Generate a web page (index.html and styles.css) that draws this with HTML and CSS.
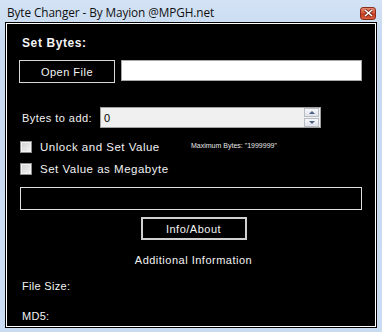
FILE: index.html
```html
<!DOCTYPE html>
<html lang="en">
<head>
    <meta charset="UTF-8">
    <title>Byte Changer - By Mayion @MPGH.net</title>
    <link rel="stylesheet" href="styles.css">
</head>
<body>
    <div class="window">
        <div class="titlebar">
            <span class="title">Byte Changer - By Mayion @MPGH.net</span>
            <span class="close-btn">
                <svg width="9" height="8" viewBox="0 0 9 8">
                    <path d="M1 1 L8 7 M8 1 L1 7" stroke="#6a2216" stroke-width="3"/>
                    <path d="M1 1 L8 7 M8 1 L1 7" stroke="#fff" stroke-width="1.6"/>
                </svg>
            </span>
        </div>

        <div class="client">
            <div class="form">
                <div class="heading">Set Bytes:</div>

                <div class="file-row">
                    <div class="btn open-btn">Open File</div>
                    <div class="path-box"></div>
                </div>

                <div class="bytes-row">
                    <span class="label">Bytes to add:</span>
                    <div class="spin-box">
                        <span class="spin-value">0</span>
                        <span class="spinner">
                            <span class="spin-half"><span class="arrow-up"></span></span>
                            <span class="spin-half"><span class="arrow-down"></span></span>
                        </span>
                    </div>
                </div>

                <div class="options">
                    <div class="check-row">
                        <span class="check"></span>
                        <span class="check-label">Unlock and Set Value</span>
                    </div>
                    <span class="max-note">Maximum Bytes: "1999999"</span>
                    <div class="check-row">
                        <span class="check"></span>
                        <span class="check-label">Set Value as Megabyte</span>
                    </div>
                </div>

                <div class="output-box"></div>

                <div class="center-col">
                    <div class="btn info-btn">Info/About</div>
                    <div class="sub-title">Additional Information</div>
                </div>

                <div class="info-line">File Size:</div>
                <div class="info-line md5">MD5:</div>
            </div>
        </div>
    </div>
</body>
</html>
```

FILE: styles.css
```css
body {
    margin: 0;
    padding: 0;
    background: #fff;
}

.window {
    width: 382px;
    height: 332px;
    box-sizing: border-box;
    display: flex;
    flex-direction: column;
    background: linear-gradient(to bottom, #d4e3f5, #c6d9f0 40px, #c9dcf2);
}

.titlebar {
    height: 22px;
    flex-shrink: 0;
    display: flex;
    align-items: center;
    justify-content: space-between;
    padding: 0 6px 0 7px;
}

.title {
    font-family: "Open Sans", "Noto Sans", sans-serif;
    font-size: 11.8px;
    color: #101010;
    margin-top: 1px;
    letter-spacing: -0.1px;
}

.close-btn {
    width: 16px;
    height: 13px;
    box-sizing: border-box;
    margin-top: 4px;
    border: 1px solid #8a2c1c;
    border-radius: 3px;
    background: linear-gradient(to bottom, #e48a70, #d5573a 45%, #c23b1f 55%, #d8603f);
    display: flex;
    align-items: center;
    justify-content: center;
}

.client {
    flex: 1;
    margin: 0 5px 4px 5px;
    padding: 1px;
    background: #000;
    display: flex;
}

.form {
    flex: 1;
    border: 1px solid #fff;
    background: #000;
    padding: 0 13px 0 12px;
    color: #f2f2f2;
    font-family: "Liberation Sans", Arial, sans-serif;
    font-size: 11px;
}

.heading {
    font-weight: bold;
    font-size: 12px;
    color: #f4f4f4;
    margin: 12px 0 0 3px;
    height: 14px;
    line-height: 14px;
    letter-spacing: 0.6px;
}

.file-row {
    display: flex;
    align-items: flex-start;
    gap: 6px;
    margin-top: 10px;
}

.btn {
    box-sizing: border-box;
    display: flex;
    align-items: center;
    justify-content: center;
    color: #f4f4f4;
    letter-spacing: 0.5px;
}

.open-btn {
    width: 96px;
    height: 23px;
    border: 1px solid #d8d8d8;
}

.path-box {
    flex: 1;
    height: 21px;
    box-sizing: border-box;
    background: #fff;
    border: 1px solid #a8a8a8;
}

.bytes-row {
    display: flex;
    align-items: center;
    margin-top: 24px;
}

.label {
    width: 81px;
    padding-left: 3px;
    box-sizing: border-box;
    letter-spacing: 0.45px;
}

.spin-box {
    width: 221px;
    height: 21px;
    box-sizing: border-box;
    background: #f0f0f0;
    border: 1px solid #a0a0a0;
    display: flex;
    align-items: center;
    justify-content: space-between;
    color: #000;
    padding-left: 3px;
}

.spinner {
    width: 15px;
    height: 19px;
    display: flex;
    flex-direction: column;
    gap: 1px;
    margin-right: 1px;
}

.spin-half {
    flex: 1;
    box-sizing: border-box;
    border: 1px solid #b8bcc4;
    background: linear-gradient(to bottom, #f6f7f9, #dfe3ea);
    display: flex;
    align-items: center;
    justify-content: center;
}

.arrow-up {
    border-left: 3px solid transparent;
    border-right: 3px solid transparent;
    border-bottom: 3px solid #4c5f86;
}

.arrow-down {
    border-left: 3px solid transparent;
    border-right: 3px solid transparent;
    border-top: 3px solid #4c5f86;
}

.options {
    display: grid;
    grid-template-columns: 172px 1fr;
    row-gap: 10px;
    margin-top: 13px;
    align-items: center;
}

.check-row {
    display: flex;
    align-items: center;
    gap: 8px;
    padding-left: 1px;
    height: 12px;
}

.check {
    width: 12px;
    height: 12px;
    box-sizing: border-box;
    border: 1px solid #8e8f8f;
    background: linear-gradient(135deg, #cfcfcf, #f6f6f6);
    box-shadow: inset 0 0 0 1px #f4f4f4;
}

.check-label {
    font-size: 11.5px;
    letter-spacing: 0.5px;
}

.max-note {
    font-size: 7px;
    color: #e8e8e8;
    margin-top: -3px;
}

.output-box {
    height: 23px;
    box-sizing: border-box;
    border: 1px solid #e0e0e0;
    margin: 12px 0 0 1px;
}

.center-col {
    display: flex;
    flex-direction: column;
    align-items: center;
    padding-left: 6px;
}

.info-btn {
    width: 106px;
    height: 23px;
    margin-top: 7px;
    border: 2px solid #d0d0d0;
}

.sub-title {
    margin-top: 13px;
    height: 14px;
    line-height: 14px;
    letter-spacing: 0.5px;
}

.info-line {
    margin: 12px 0 0 3px;
    height: 14px;
    line-height: 14px;
    letter-spacing: 0.3px;
}

.md5 {
    margin-top: 16px;
}
```
